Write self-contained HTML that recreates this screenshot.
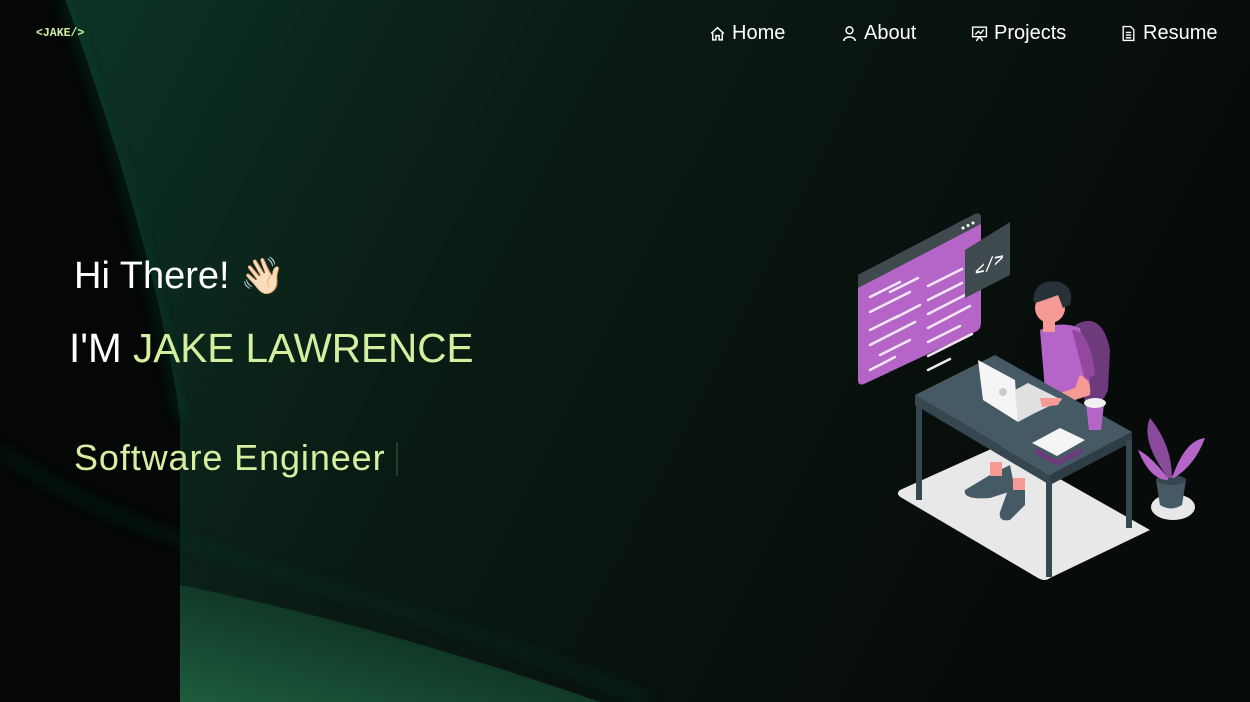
<!DOCTYPE html>
<html><head><meta charset="utf-8">
<style>
html,body{margin:0;padding:0;width:1250px;height:702px;overflow:hidden;background:#060a08;}
body{position:relative;font-family:"Liberation Sans",sans-serif;color:#fff;}
#bg{position:absolute;left:0;top:0}
.logo{position:absolute;left:36px;top:27px;font-family:"Liberation Mono",monospace;font-weight:bold;font-size:11.5px;color:#d6eea0;}
.nav{position:absolute;top:22px;font-size:20px;color:#fff;display:flex;align-items:center;gap:6px}
.nav svg{width:17px;height:17px}
h1{position:absolute;margin:0;font-weight:normal}
.hi{left:74px;top:255px;font-size:38px}
.name{left:69px;top:325px;font-size:40.5px}
.name span{color:#d6eea0}
.role{left:74px;top:437px;font-size:36px;letter-spacing:0.9px;color:#d6eea0}
.cursor{position:absolute;left:396px;top:442px;width:2px;height:34px;background:#2a3a2c}
</style></head><body>
<svg id="bg" width="1250" height="702" viewBox="0 0 1250 702">
<defs>
<filter id="b1"><feGaussianBlur stdDeviation="25"/></filter>
<filter id="b2"><feGaussianBlur stdDeviation="6"/></filter>
<linearGradient id="g1" x1="0" y1="0" x2="1" y2="0.3">
<stop offset="0" stop-color="#0c3324"/><stop offset="0.45" stop-color="#0a1a13"/><stop offset="1" stop-color="#070b09"/></linearGradient>
<linearGradient id="g2" x1="0" y1="1" x2="1" y2="0">
<stop offset="0" stop-color="#1f5c3d"/><stop offset="0.6" stop-color="#0e3324"/><stop offset="1" stop-color="#0a1a13"/></linearGradient>
</defs>
<rect width="1250" height="702" fill="#070b09"/>
<path d="M65 0 C110 120 165 300 180 420 L180 702 L1250 702 L1250 0 Z" fill="url(#g1)"/>
<path d="M180 585 C330 615 480 660 600 702 L180 702 Z" fill="url(#g2)"/>
<path d="M0 0 L65 0 C110 120 165 300 180 420 L180 702 L0 702 Z" fill="#040705"/>
<path d="M0 450 C150 560 400 590 650 702" stroke="#103a29" stroke-width="5" fill="none" filter="url(#b2)" opacity="0.6"/>
<path d="M62 0 C110 120 160 300 180 420" stroke="#124e35" stroke-width="4" fill="none" filter="url(#b2)" opacity="0.7"/>
</svg>
<div class="logo">&lt;JAKE/&gt;</div>
<div class="nav" style="left:709px"><svg viewBox="0 0 16 16" fill="none" stroke="#fff" stroke-width="1.4"><path d="M2 8 L8 2.5 L14 8 M3.5 6.7 V14 H6.5 V10 H9.5 V14 H12.5 V6.7"/></svg>Home</div>
<div class="nav" style="left:841px"><svg viewBox="0 0 16 16" fill="none" stroke="#fff" stroke-width="1.4"><circle cx="8" cy="5" r="3.2"/><path d="M2.5 15 C3 10 13 10 13.5 15"/></svg>About</div>
<div class="nav" style="left:971px"><svg viewBox="0 0 16 16" fill="none" stroke="#fff" stroke-width="1.3"><rect x="1.5" y="2" width="13" height="9"/><path d="M4 9 L7 6 L9 8 L12 4.5 M8 11 L5 15 M8 11 L11 15"/></svg>Projects</div>
<div class="nav" style="left:1120px"><svg viewBox="0 0 16 16" fill="none" stroke="#fff" stroke-width="1.3"><path d="M3 1.5 H10 L13 4.5 V14.5 H3 Z"/><path d="M5.5 7 H10.5 M5.5 9.5 H10.5 M5.5 12 H10.5"/></svg>Resume</div>

<h1 class="hi">Hi There! <span style="font-family:'Noto Color Emoji','DejaVu Sans',sans-serif;font-size:36px">👋🏻</span></h1>
<h1 class="name">I'M <span>JAKE LAWRENCE</span></h1>
<h1 class="role">Software Engineer</h1>
<div class="cursor"></div>

<svg style="position:absolute;left:850px;top:200px" width="370" height="390" viewBox="0 0 370 390">
<path d="M50 290 L150 245 L300 330 L200 378 Q195 382 188 378 L52 298 Q45 294 50 290Z" fill="#e8e8e8"/>
<ellipse cx="323" cy="307" rx="22" ry="13" fill="#e8e8e8"/>
<path d="M8 75 L125 14 Q131 12 131 18 L131 122 Q131 130 125 132 L14 184 Q8 186 8 180Z" fill="#b565c8"/>
<path d="M8 75 L125 14 Q131 12 131 18 L131 24 L8 88Z" fill="#3f4a4e"/>
<g fill="#fff"><circle cx="113" cy="28" r="1.5"/><circle cx="118" cy="25.5" r="1.5"/><circle cx="123" cy="23" r="1.5"/></g>
<g stroke="#f2e6f5" stroke-width="2.5" stroke-linecap="round">
<path d="M20 97 L50 82 M40 92 L68 78 M20 112 L60 92 M45 118 L70 105 M20 130 L48 116 M20 145 L65 122 M30 155 L60 140 M20 170 L45 157 M78 86 L112 69 M78 100 L112 83 M78 114 L115 95 M78 128 L120 106 M78 142 L110 126 M78 156 L122 134 M78 170 L100 159"/>
</g>
<path d="M115 50 L160 22 L160 75 L115 98Z" fill="#3f4a4e"/>
<g transform="translate(125 78) skewY(-30)"><text x="0" y="0" fill="#fff" font-family="Liberation Mono,monospace" font-size="16" font-weight="bold">&lt;/&gt;</text></g>
<path d="M225 125 Q252 110 260 150 L258 190 Q250 210 235 205Z" fill="#6d3a7c"/>
<path d="M190 130 Q210 120 230 128 L240 185 Q225 200 195 190Z" fill="#b565c8"/>
<path d="M222 130 Q240 130 245 175 L235 180Z" fill="#93489f"/>
<rect x="193" y="112" width="12" height="20" fill="#f59a94"/>
<circle cx="200" cy="108" r="15" fill="#f59a94"/>
<path d="M183 100 Q185 78 210 82 Q225 88 220 105 L213 108 L208 95 Q195 100 185 103Z" fill="#263238"/>
<path d="M230 175 Q242 180 240 195 L195 210 L190 200 L225 188Z" fill="#f59a94"/>
<path d="M65 195 L145 155 L282 232 L200 275Z" fill="#455a64"/>
<path d="M65 195 L200 275 L200 285 L65 205Z" fill="#37474f"/>
<path d="M200 275 L282 232 L282 242 L200 285Z" fill="#2f3d44"/>
<rect x="66" y="200" width="6" height="100" fill="#37474f"/>
<rect x="196" y="282" width="6" height="95" fill="#37474f"/>
<rect x="276" y="240" width="6" height="88" fill="#37474f"/>
<path d="M140 275 L160 265 L165 290 L140 298 Q112 300 115 290Z" fill="#455a64"/>
<path d="M158 290 L175 285 L175 305 L160 320 Q148 322 150 312Z" fill="#455a64"/>
<rect x="140" y="262" width="12" height="14" fill="#f59a94"/>
<rect x="163" y="278" width="12" height="12" fill="#f59a94"/>
<path d="M128 160 L165 180 L168 222 L133 200Z" fill="#f5f5f5"/>
<path d="M168 222 L185 213 L212 200 L178 183 L165 190Z" fill="#e0e0e0"/>
<circle cx="153" cy="192" r="4" fill="#ccc"/>
<path d="M190 198 L212 198 L208 205 L192 207Z" fill="#f59a94"/>
<path d="M236 204 L254 204 L251 230 L239 230Z" fill="#b565c8"/>
<ellipse cx="245" cy="203" rx="11" ry="5" fill="#f0f0f0"/>
<path d="M182 243 L210 228 L235 240 L207 256Z" fill="#f5f5f5"/>
<path d="M185 248 L207 260 L232 248 L232 253 L207 266 L185 254Z" fill="#6d3a7c"/>
<path d="M306 280 L336 280 L332 305 Q321 312 310 305Z" fill="#455a64"/>
<ellipse cx="321" cy="280" rx="15" ry="5" fill="#37474f"/>
<path d="M318 278 Q290 240 300 218 Q322 245 322 278Z" fill="#8a4a9c"/>
<path d="M322 278 Q335 240 355 238 Q345 265 324 278Z" fill="#b565c8"/>
<path d="M318 278 Q300 255 288 250 Q300 280 318 280Z" fill="#b565c8"/>
</svg>
</body></html>
